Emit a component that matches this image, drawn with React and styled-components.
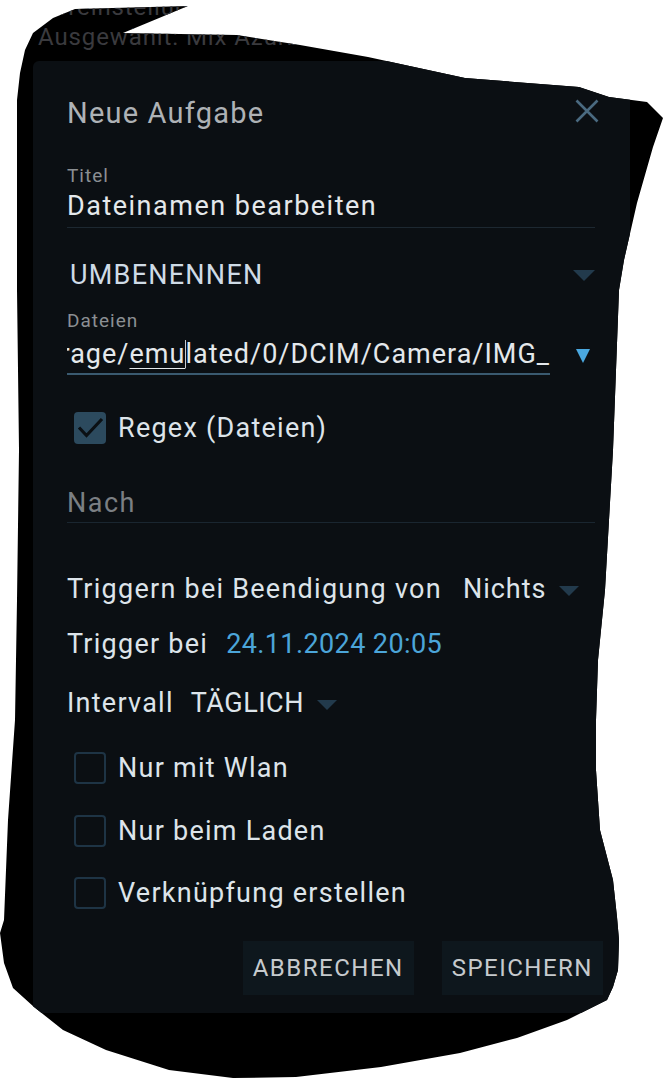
import React from "react";
import styled, { createGlobalStyle } from "styled-components";

const Global = createGlobalStyle`
  html, body { margin: 0; padding: 0; background: #ffffff; }
  body { font-family: Roboto, "Liberation Sans", sans-serif; }
  * { box-sizing: border-box; }
`;

const lasso = [
  [53, 18], [75, 9], [188, 6], [123, 33], [237, 35], [300, 45], [368, 57], [465, 78],
  [579, 87], [609, 97], [647, 102], [663, 118], [653, 147], [637, 203], [624, 260],
  [619, 290], [613, 450], [605, 590], [598, 660], [596, 720], [596, 770], [600, 830],
  [613, 880], [617, 917], [619, 940], [618, 970], [613, 987], [607, 1000], [567, 1020],
  [517, 1038], [460, 1053], [381, 1067], [296, 1077], [233, 1078], [169, 1070],
  [106, 1050], [63, 1030], [34, 1007], [13, 988], [4, 963], [0, 933], [4, 920],
  [8, 820], [15, 720], [17, 600], [19, 450], [17, 290], [17, 100], [20, 73], [25, 50], [33, 33],
]
  .map(([x, y]) => `${x}px ${y}px`)
  .join(", ");

const Screen = styled.div`
  width: 663px;
  height: 1080px;
  background: #000;
  overflow: hidden;
  display: flex;
  flex-direction: column;
  clip-path: polygon(${lasso});
`;

const Behind = styled.div`
  margin-top: -8px;
  padding-left: 38px;
  font-size: 24px;
  line-height: 30px;
  letter-spacing: 0.9px;
  color: #3a3a3e;
  white-space: nowrap;
`;

const Panel = styled.div`
  margin: 9px 0 0 33px;
  width: 597px;
  height: 952px;
  flex-shrink: 0;
  background: #0b0f13;
  border-radius: 6px 6px 0 0;
  padding: 0 35px 0 34px;
  display: flex;
  flex-direction: column;
  letter-spacing: 1.25px;
`;

const Header = styled.div`
  margin-top: 34px;
  height: 36px;
  display: flex;
  align-items: center;
  justify-content: space-between;
`;

const DialogTitle = styled.h1`
  margin: 0;
  font-size: 29px;
  line-height: 36px;
  font-weight: 400;
  letter-spacing: 1.2px;
  color: #aeb2b6;
`;

const CloseButton = styled.svg`
  width: 24px;
  height: 24px;
  margin: 0 -4px 5px 0;
`;

const Field = styled.div`
  display: flex;
  flex-direction: column;
  margin-top: ${(p) => p.$mt}px;
  padding-bottom: ${(p) => p.$pb || 0}px;
  border-bottom: ${(p) => (p.$line ? `1px solid ${p.$line}` : "none")};
`;

const FieldLabel = styled.div`
  font-size: 19px;
  line-height: 22px;
  letter-spacing: 1px;
  color: #8b8f93;
`;

const FieldValue = styled.div`
  margin-top: ${(p) => p.$mt || 0}px;
  font-size: 27px;
  line-height: 34px;
  letter-spacing: 1.5px;
  color: ${(p) => (p.$placeholder ? "#7b7f83" : "#e4e8eb")};
`;

const SpinnerRow = styled.div`
  margin-top: ${(p) => p.$mt}px;
  height: 34px;
  display: flex;
  align-items: center;
  justify-content: space-between;
  padding-left: 3px;
  font-size: 27px;
  color: #cfdbe6;
`;

const Triangle = styled.span`
  flex-shrink: 0;
  width: 0;
  height: 0;
  border-left: ${(p) => p.$w / 2}px solid transparent;
  border-right: ${(p) => p.$w / 2}px solid transparent;
  border-top: ${(p) => p.$h}px solid ${(p) => p.$color || "#223a4c"};
  margin-left: ${(p) => p.$ml || 0}px;
  margin-top: ${(p) => p.$dy || 0}px;
`;

const InputRow = styled.div`
  margin-top: 5px;
  display: flex;
  align-items: center;
`;

const Input = styled.div`
  width: 483px;
  height: 38px;
  padding-bottom: 2px;
  border-bottom: 2px solid #3a5a70;
  display: flex;
  justify-content: flex-end;
  overflow: hidden;
  white-space: nowrap;
  font-size: 27px;
  line-height: 34px;
  letter-spacing: 1px;
  color: #e4e8eb;
`;

const Composing = styled.span`
  text-decoration: underline;
  text-decoration-thickness: 1px;
  text-underline-offset: 5px;
`;

const TextCaret = styled.span`
  display: inline-block;
  width: 1.5px;
  height: 28px;
  margin: 0 -0.75px;
  background: #c8ccd0;
  vertical-align: -5px;
`;

const CheckRow = styled.label`
  margin-top: ${(p) => p.$mt}px;
  height: 40px;
  display: flex;
  align-items: center;
  gap: 12px;
  padding-left: 7px;
  font-size: 27px;
  color: #dde4ea;
`;

const Box = styled.span`
  width: 32px;
  height: 32px;
  border-radius: 4px;
  flex-shrink: 0;
  display: flex;
  align-items: center;
  justify-content: center;
  background: ${(p) => (p.$checked ? "#2c4a5e" : "transparent")};
  border: ${(p) => (p.$checked ? "none" : "2.5px solid #1e3445")};
`;

const InlineRow = styled.div`
  margin-top: ${(p) => p.$mt}px;
  height: 34px;
  display: flex;
  align-items: center;
  font-size: 27px;
  color: #dde4ea;
  white-space: nowrap;
`;

const Value = styled.span`
  margin-left: ${(p) => p.$ml}px;
  color: ${(p) => (p.$accent ? "#4ba5d9" : "#dde4ea")};
  letter-spacing: ${(p) => p.$ls}px;
`;

const Actions = styled.div`
  margin-top: 28px;
  margin-right: -8px;
  display: flex;
  justify-content: flex-end;
  gap: 28px;
`;

const ActionButton = styled.button`
  height: 54px;
  padding: 0 10px;
  border: none;
  border-radius: 0;
  background: #0e171d;
  font-family: inherit;
  font-size: 24px;
  letter-spacing: 1.5px;
  color: #c6cacd;
`;

function Check({ checked, children, mt }) {
  return (
    <CheckRow $mt={mt}>
      <Box $checked={checked}>
        {checked && (
          <svg width="32" height="32" viewBox="0 0 32 32">
            <path d="M5 15.5 L12.5 23.5 L28 7" fill="none" stroke="#0b1014" strokeWidth="3.2" />
          </svg>
        )}
      </Box>
      {children}
    </CheckRow>
  );
}

export default function App() {
  return (
    <>
      <Global />
      <Screen>
        <Behind>
          <div>Voreinstellung</div>
          <div>Ausgewählt: Mix Azurblau</div>
        </Behind>
        <Panel>
          <Header>
            <DialogTitle>Neue Aufgabe</DialogTitle>
            <CloseButton viewBox="0 0 24 24">
              <path d="M1.5 1.5 L22.5 22.5 M22.5 1.5 L1.5 22.5" stroke="#4a6a80" strokeWidth="2.6" fill="none" />
            </CloseButton>
          </Header>

          <Field $mt={34} $pb={4} $line="#1d2831">
            <FieldLabel>Titel</FieldLabel>
            <FieldValue $mt={2}>Dateinamen bearbeiten</FieldValue>
          </Field>

          <SpinnerRow $mt={30}>
            UMBENENNEN
            <Triangle $w={22} $h={11} />
          </SpinnerRow>

          <Field $mt={18}>
            <FieldLabel>Dateien</FieldLabel>
            <InputRow>
              <Input>
                <span>
                  /storage/<Composing>emu</Composing>
                  <TextCaret />
                  lated/0/DCIM/Camera/IMG_
                </span>
              </Input>
              <Triangle $w={14} $h={14} $ml={26} $color="#4aa8e0" />
            </InputRow>
          </Field>

          <Check checked mt={33}>Regex (Dateien)</Check>

          <Field $mt={38} $pb={2} $line="#1a2630">
            <FieldValue $placeholder>Nach</FieldValue>
          </Field>

          <InlineRow $mt={49}>
            Triggern bei Beendigung von
            <Value $ml={21} $ls={1}>Nichts</Value>
            <Triangle $w={21} $h={10} $ml={12} $dy={3} />
          </InlineRow>

          <InlineRow $mt={21}>
            Trigger bei
            <Value $ml={18} $ls={0.4} $accent>24.11.2024 20:05</Value>
          </InlineRow>

          <InlineRow $mt={25}>
            Intervall
            <Value $ml={17} $ls={0.5}>TÄGLICH</Value>
            <Triangle $w={20} $h={10} $ml={13} $dy={3} />
          </InlineRow>

          <Check mt={28}>Nur mit Wlan</Check>
          <Check mt={23}>Nur beim Laden</Check>
          <Check mt={22}>Verknüpfung erstellen</Check>

          <Actions>
            <ActionButton>ABBRECHEN</ActionButton>
            <ActionButton>SPEICHERN</ActionButton>
          </Actions>
        </Panel>
      </Screen>
    </>
  );
}
